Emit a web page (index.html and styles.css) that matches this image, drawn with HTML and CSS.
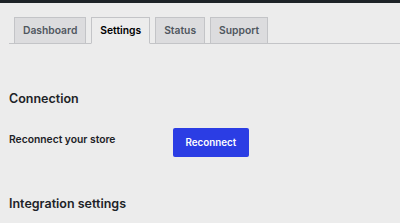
FILE: index.html
```html
<!DOCTYPE html>
<html>
<head>
    <meta charset="utf-8">
    <meta name="viewport" content="width=device-width, initial-scale=1">
    <title>Settings</title>
    <link rel="stylesheet" href="styles.css">
</head>
<body>
    <div class="admin-bar"></div>

    <div class="wrap">
        <nav class="nav-tabs">
            <a href="#" class="nav-tab">Dashboard</a>
            <a href="#" class="nav-tab -active">Settings</a>
            <a href="#" class="nav-tab">Status</a>
            <a href="#" class="nav-tab">Support</a>
        </nav>

        <h2 class="section-title">Connection</h2>

        <div class="form-row">
            <span class="form-label">Reconnect your store</span>
            <button class="button-primary">Reconnect</button>
        </div>

        <h2 class="section-title -spaced">Integration settings</h2>
    </div>
</body>
</html>
```

FILE: styles.css
```css
* { box-sizing: border-box; margin: 0; }

:root {
    --background-color: #ececec;
    --text-color: #1d2327;
    --border-color: #c3c4c7;
    --primary-color: #2b3de4;
}

body {
    margin: 0;
    background-color: var(--background-color);
    color: var(--text-color);
    font-family: Inter, "Noto Sans", sans-serif;
}

.admin-bar {
    height: 3px;
    background-color: #1d2327;
}

.wrap {
    padding-left: 9px;
}

.nav-tabs {
    display: flex;
    gap: 5px;
    margin-top: 14px;
    padding-left: 5px;
    border-bottom: 1px solid var(--border-color);
}

.nav-tab {
    display: block;
    height: 27px;
    margin-bottom: -1px;
    padding: 0 8px;
    border: 1px solid var(--border-color);
    background-color: #dcdcde;
    color: #50575e;
    font-size: 10.3px;
    font-weight: 600;
    line-height: 25px;
    text-decoration: none;
}

.nav-tab.-active {
    background-color: var(--background-color);
    border-bottom-color: var(--background-color);
    color: #000;
}

.section-title {
    margin-top: 46px;
    font-size: 12.5px;
    font-weight: 600;
    line-height: 17px;
}

.section-title.-spaced {
    margin-top: 38px;
}

.form-row {
    display: flex;
    align-items: flex-start;
    margin-top: 21px;
}

.form-label {
    width: 164px;
    padding-top: 4px;
    font-size: 10.3px;
    font-weight: 600;
    line-height: 14px;
}

.button-primary {
    height: 29px;
    padding: 0 12.5px;
    border: none;
    border-radius: 2px;
    background-color: var(--primary-color);
    color: #fff;
    font-family: inherit;
    font-size: 9.8px;
    font-weight: 600;
    cursor: pointer;
}
```
